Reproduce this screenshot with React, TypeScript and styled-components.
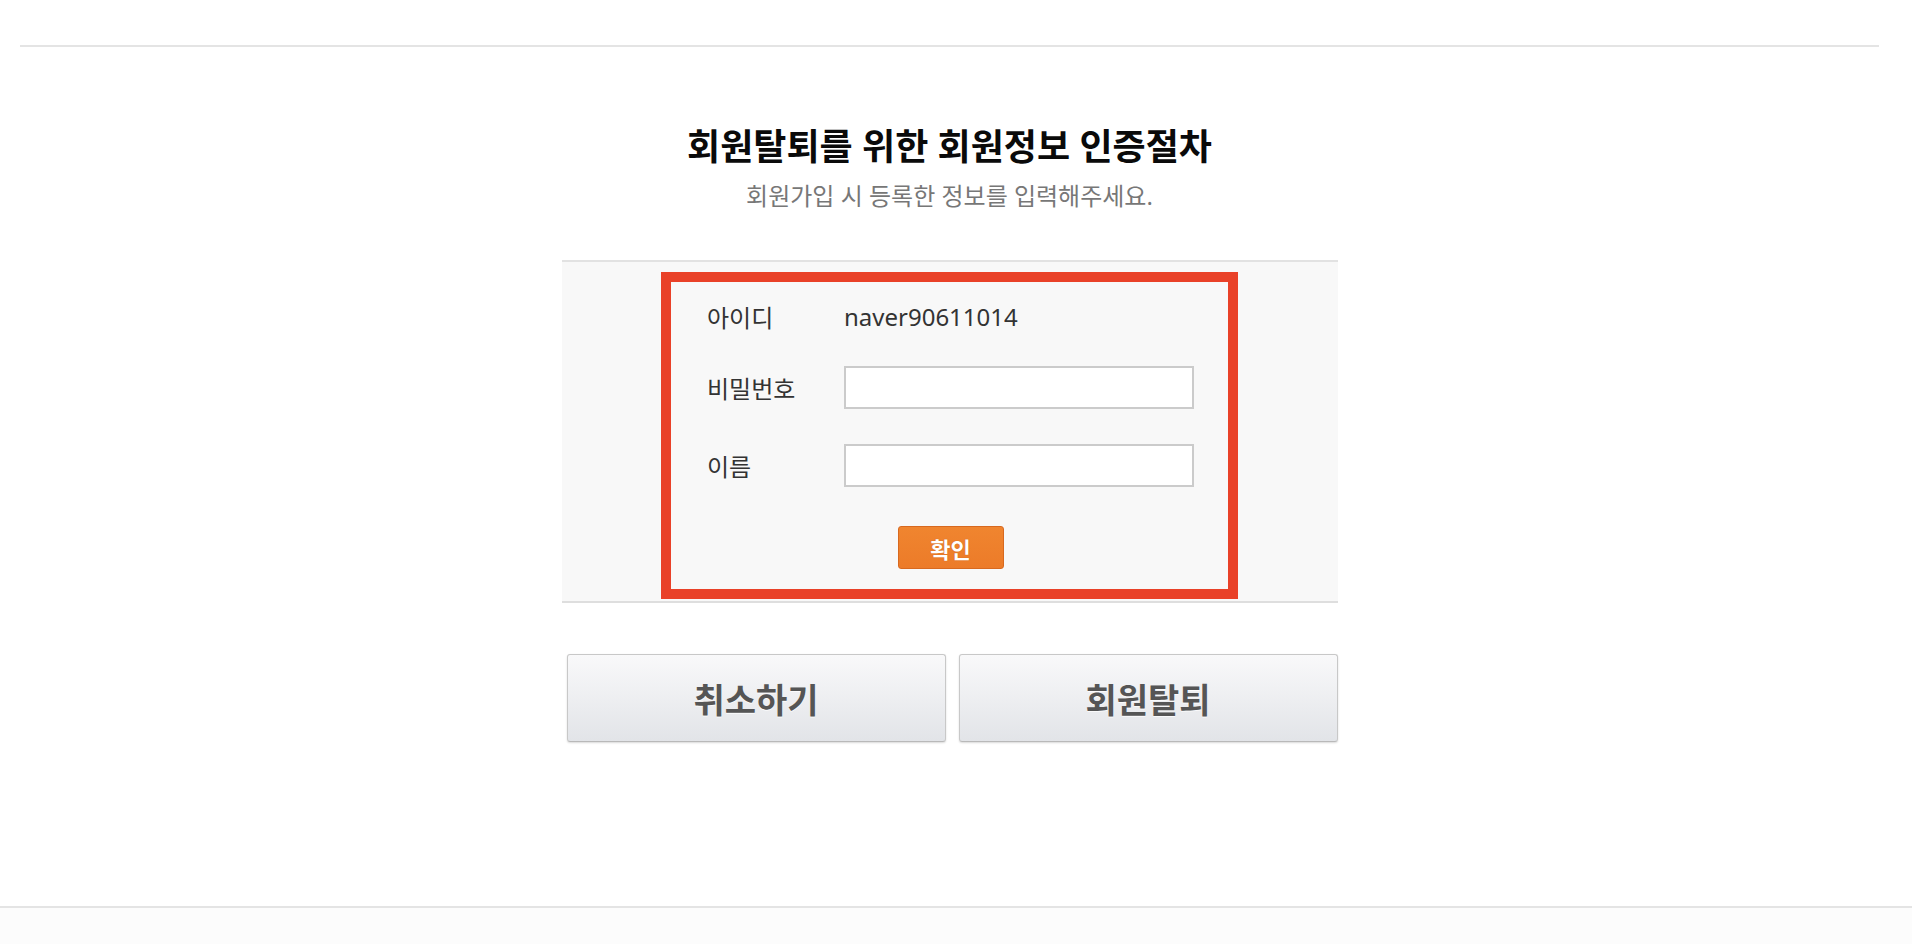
import { FC } from 'react';
import styled, { createGlobalStyle } from 'styled-components';

const GlobalStyle = createGlobalStyle`
  html, body {
    margin: 0;
    padding: 0;
    background: #fff;
  }

  body {
    font-family: 'Noto Sans', 'Noto Sans CJK KR', sans-serif;
    color: #333;
  }
`;

const Page = styled.div`
  min-height: 100vh;
  display: flex;
  flex-direction: column;
`;

const Container = styled.div`
  padding: 0 33px 0 20px;
`;

const TopRule = styled.div`
  margin-top: 45px;
  height: 2px;
  background: #e4e4e4;
`;

const Main = styled.main`
  display: flex;
  flex-direction: column;
  align-items: center;
`;

const Title = styled.h2`
  margin: 80px 0 0;
  font-size: 36px;
  line-height: 40px;
  font-weight: 700;
  color: #0a0a0a;
`;

const Subtitle = styled.p`
  margin: 14px 0 0;
  font-size: 24px;
  line-height: 30px;
  color: #777;
`;

const Panel = styled.div`
  margin-top: 49px;
  width: 776px;
  box-sizing: border-box;
  padding: 10px 0 2px;
  display: flex;
  justify-content: center;
  background: #f8f8f8;
  border-top: 2px solid #e2e2e2;
  border-bottom: 2px solid #dedede;
`;

const VerifyBox = styled.form`
  width: 577px;
  height: 327px;
  box-sizing: border-box;
  padding: 0 34px 0 36px;
  border: 10px solid #e94128;
  display: flex;
  flex-direction: column;
`;

const Field = styled.div<{ $gap: number }>`
  margin-top: ${({ $gap }) => $gap}px;
  height: 43px;
  display: grid;
  grid-template-columns: 137px 350px;
  align-items: center;
`;

const Label = styled.span`
  font-size: 24px;
  color: #333;
`;

const Value = styled.span`
  font-size: 24px;
  color: #333;
`;

const Input = styled.input`
  height: 43px;
  box-sizing: border-box;
  border: 2px solid #cbcbcb;
  border-radius: 0;
  background: #fff;
  padding: 0 10px;
  font: inherit;
  font-size: 20px;
  outline: none;
`;

const ConfirmButton = styled.button`
  margin: 39px auto 0;
  width: 106px;
  height: 43px;
  box-sizing: border-box;
  padding: 0;
  border: 1px solid #d8691f;
  border-radius: 3px;
  background: linear-gradient(#f0852f, #ec7b29);
  color: #fff;
  font-family: 'Noto Sans CJK KR', sans-serif;
  font-size: 22px;
  font-weight: 700;
  text-shadow: 0 0 1px rgba(160, 70, 10, 0.6);
  cursor: pointer;
`;

const ButtonRow = styled.div`
  margin-top: 51px;
  padding-left: 5px;
  display: flex;
  column-gap: 13px;
`;

const BigButton = styled.button`
  width: 379px;
  height: 88px;
  box-sizing: border-box;
  padding: 0;
  border: 1px solid #c8c8c8;
  border-bottom-color: #b9b9b9;
  border-radius: 3px;
  background: linear-gradient(#f9f9fa, #e2e4e8);
  box-shadow: 0 1px 2px rgba(0, 0, 0, 0.15);
  color: #555;
  font-family: 'Noto Sans CJK KR', sans-serif;
  font-size: 34px;
  font-weight: 700;
  text-shadow: 0 1px 0 rgba(255, 255, 255, 0.8);
  cursor: pointer;
`;

const Footer = styled.footer`
  margin-top: 164px;
  flex: 1;
  border-top: 2px solid #e4e4e4;
  background: #fcfcfc;
`;

const App: FC = () => {
  return (
    <Page>
      <GlobalStyle />
      <Container>
        <TopRule />
        <Main>
          <Title>회원탈퇴를 위한 회원정보 인증절차</Title>
          <Subtitle>회원가입 시 등록한 정보를 입력해주세요.</Subtitle>
          <Panel>
            <VerifyBox onSubmit={(e) => e.preventDefault()}>
              <Field $gap={13}>
                <Label>아이디</Label>
                <Value>naver90611014</Value>
              </Field>
              <Field $gap={28}>
                <Label>비밀번호</Label>
                <Input type='password' />
              </Field>
              <Field $gap={35}>
                <Label>이름</Label>
                <Input type='text' />
              </Field>
              <ConfirmButton type='submit'>확인</ConfirmButton>
            </VerifyBox>
          </Panel>
          <ButtonRow>
            <BigButton type='button'>취소하기</BigButton>
            <BigButton type='button'>회원탈퇴</BigButton>
          </ButtonRow>
        </Main>
      </Container>
      <Footer />
    </Page>
  );
};

export default App;
